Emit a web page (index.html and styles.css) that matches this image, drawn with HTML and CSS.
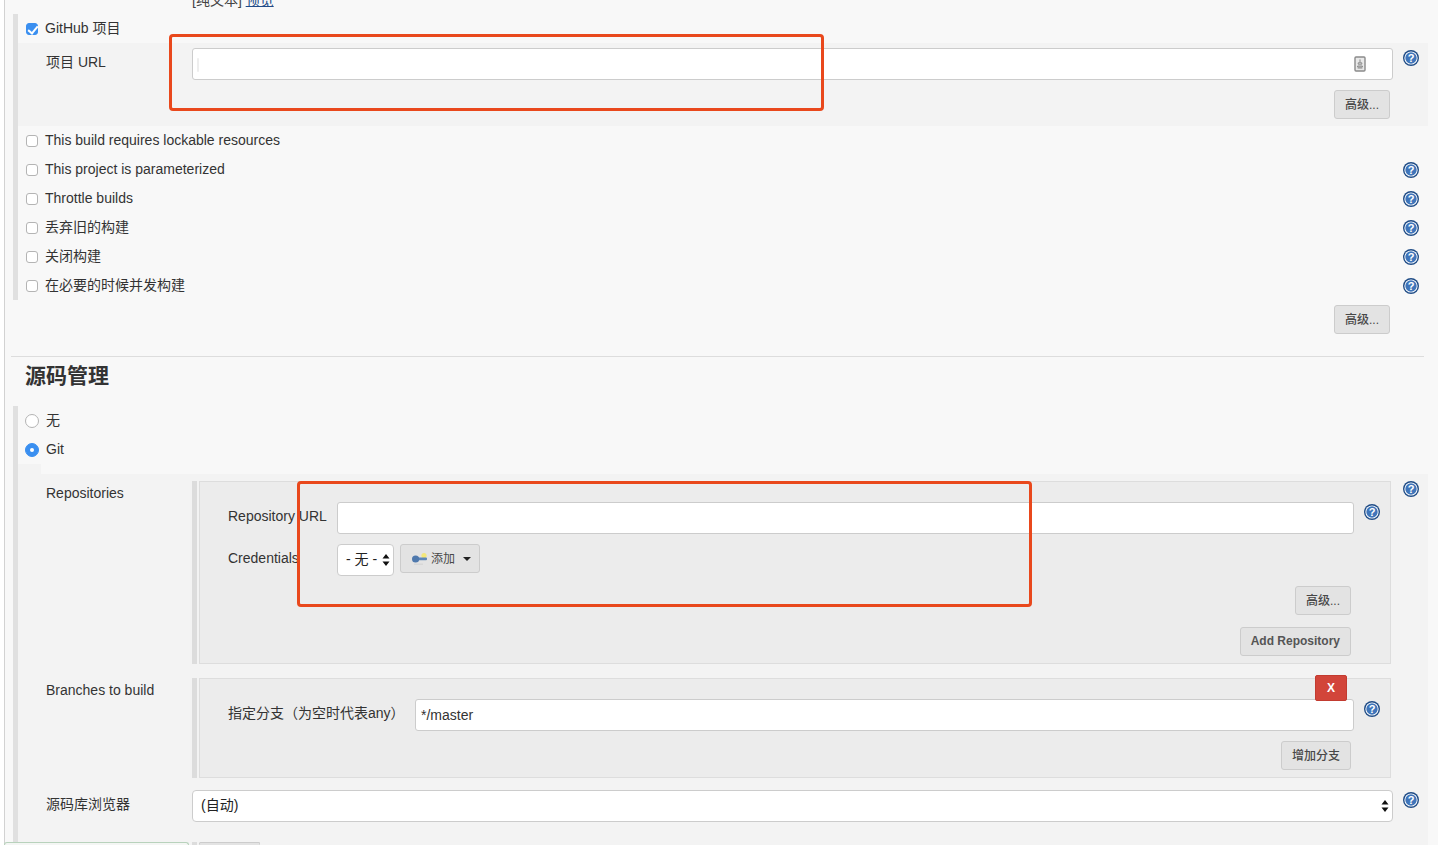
FILE: index.html
```html
<!DOCTYPE html>
<html lang="zh">
<head>
<meta charset="utf-8">
<title>Jenkins</title>
<link rel="stylesheet" href="styles.css">
</head>
<body>
<svg class="defs" width="0" height="0" aria-hidden="true">
  <defs>
    <symbol id="help" viewBox="0 0 16 16">
      <circle cx="8" cy="8" r="8" fill="#1f4c86"/>
      <circle cx="8" cy="8" r="6.6" fill="#fff"/>
      <circle cx="8" cy="8" r="5.7" fill="#3f75ba"/>
      <text x="8" y="12" text-anchor="middle" font-family="Liberation Sans, sans-serif" font-size="11" font-weight="700" fill="#fff">?</text>
    </symbol>
    <symbol id="updown" viewBox="0 0 8 12">
      <path d="M4 0 7.5 4.6H.5ZM4 12 .5 7.4h7Z" fill="#111"/>
    </symbol>
  </defs>
</svg>
<div class="page">
  <div class="pre-line">[纯文本] <a class="preview" href="#">预览</a></div>

  <section class="section">
    <div class="row"><label class="check-label"><input class="check" type="checkbox" checked>GitHub 项目</label></div>
    <div class="block block-github">
      <div class="field-row">
        <div class="label label-url">项目 URL</div>
        <div class="field-wrap">
          <input class="text-input" type="text">
          <span class="smudge"></span>
          <svg class="doc-icon" width="12" height="16" viewBox="0 0 12 16"><rect x="1" y="1" width="10" height="14" rx="1" fill="#e9e9e9" stroke="#8a8a8a" stroke-width="1.4"/><path d="M6 3.4v3.2M4.2 6.8h3.6v1.4H4.2zM3.6 10h4.8v1H3.6zM3.6 12h4.8" stroke="#8a8a8a" fill="none"/></svg>
        </div>
        <svg class="help"><use href="#help"/></svg>
      </div>
      <div class="btn-line btn-line-github"><button class="btn">高级...</button></div>
    </div>
    <div class="row"><label class="check-label"><input class="check" type="checkbox">This build requires lockable resources</label></div>
    <div class="row"><label class="check-label"><input class="check" type="checkbox">This project is parameterized</label><svg class="help"><use href="#help"/></svg></div>
    <div class="row"><label class="check-label"><input class="check" type="checkbox">Throttle builds</label><svg class="help"><use href="#help"/></svg></div>
    <div class="row"><label class="check-label"><input class="check" type="checkbox">丢弃旧的构建</label><svg class="help"><use href="#help"/></svg></div>
    <div class="row"><label class="check-label"><input class="check" type="checkbox">关闭构建</label><svg class="help"><use href="#help"/></svg></div>
    <div class="row"><label class="check-label"><input class="check" type="checkbox">在必要的时候并发构建</label><svg class="help"><use href="#help"/></svg></div>
  </section>
  <div class="btn-line btn-line-general"><button class="btn">高级...</button></div>

  <hr class="rule">
  <h2 class="title">源码管理</h2>

  <section class="section section-scm">
    <div class="row"><label class="check-label radio-label"><input class="radio" type="radio" name="scm">无</label></div>
    <div class="row"><label class="check-label radio-label"><input class="radio" type="radio" name="scm" checked>Git</label></div>
    <div class="notch"></div>
    <div class="block block-git">
      <div class="field-row">
        <div class="label label-repos">Repositories</div>
        <div class="chunk">
          <div class="box">
            <div class="inner-row">
              <div class="inner-label inner-label-url">Repository URL</div>
              <input class="text-input" type="text">
              <svg class="help help-inner"><use href="#help"/></svg>
            </div>
            <div class="inner-row inner-row-cred">
              <div class="inner-label inner-label-cred">Credentials</div>
              <div class="select-wrap select-none">
                <select class="select"><option>- 无 -</option></select>
                <svg class="updown" width="8" height="12"><use href="#updown"/></svg>
              </div>
              <button class="btn btn-add">
                <svg class="key" width="18" height="14" viewBox="0 0 18 14"><circle cx="13" cy="3.6" r="2.6" fill="#f3e77a"/><rect x="5" y="5.6" width="11" height="2.6" rx="1" fill="#5c86b8"/><circle cx="4.6" cy="7" r="3.6" fill="#4f79ad"/><path d="M3 12.2h9" stroke="#d3d3d3"/></svg>
                <span class="add-text">添加</span>
                <span class="caret"></span>
              </button>
            </div>
            <div class="btn-line btn-line-inner"><button class="btn">高级...</button></div>
            <div class="btn-line btn-line-repo"><button class="btn btn-strong">Add Repository</button></div>
          </div>
        </div>
        <svg class="help help-top"><use href="#help"/></svg>
      </div>

      <div class="field-row field-row-branch">
        <div class="label label-branch">Branches to build</div>
        <div class="chunk">
          <div class="box box-branch">
            <button class="btn-x">X</button>
            <div class="inner-row">
              <div class="inner-label inner-label-branch">指定分支（为空时代表any）</div>
              <input class="text-input" type="text" value="*/master">
              <svg class="help help-inner"><use href="#help"/></svg>
            </div>
            <div class="btn-line btn-line-inner"><button class="btn">增加分支</button></div>
          </div>
        </div>
      </div>

      <div class="field-row field-row-browser">
        <div class="label label-url">源码库浏览器</div>
        <div class="field-wrap select-wrap">
          <select class="select"><option>(自动)</option></select>
          <svg class="updown" width="8" height="12"><use href="#updown"/></svg>
        </div>
        <svg class="help"><use href="#help"/></svg>
      </div>

      <div class="field-row field-row-next">
        <div class="next-spacer"></div>
        <div class="chunk chunk-next"><button class="btn btn-next"></button></div>
      </div>
    </div>
  </section>

  <div class="tab-stub"></div>
  <div class="annot annot-a"></div>
  <div class="annot annot-b"></div>
</div>
</body>
</html>
```
FILE: styles.css
```css
* { box-sizing: border-box; }
html, body { margin: 0; height: 845px; overflow: hidden; }
body {
  background: #fff;
  color: #333;
  font-family: "Liberation Sans", "Noto Sans CJK SC", sans-serif;
  font-size: 14px;
}
.defs { position: absolute; }
.page {
  display: flow-root;
  position: relative;
  height: 845px;
  margin-left: 4px;
  background: #f8f8f8;
  border-left: 1px solid #d2d2d2;
}
.pre-line {
  height: 14px;
  margin-top: -7px;
  margin-left: 187px;
  font-size: 14px;
  line-height: 14px;
  color: #444;
}
.preview { color: #204a87; }
.section {
  margin-top: 7px;
  margin-left: 8px;
  border-left: 5px solid #e0e0e0;
}
.section-scm { height: 439px; margin-top: 11px; }
.row {
  display: flex;
  align-items: center;
  justify-content: space-between;
  height: 29px;
  padding: 0 19px 2px 8px;
}
.row > .help { margin-top: 2px; }
.check-label { display: flex; align-items: center; line-height: 20px; }
.check, .radio {
  appearance: none;
  position: relative;
  flex: none;
  width: 12px;
  height: 12px;
  margin: 2px 7px 0 0;
  background: #fff;
  border: 1px solid #b4b4b4;
  border-radius: 3px;
}
.check:checked { background: #3a8ff0; border-color: #3a8ff0; }
.check:checked::after {
  content: "";
  position: absolute;
  left: 3px;
  top: 0;
  width: 4px;
  height: 8px;
  border: solid #fff;
  border-width: 0 2px 2px 0;
  transform: rotate(40deg);
}
.radio { width: 14px; height: 14px; margin: 2px 7px 0 -1px; border-radius: 50%; }
.radio:checked { background: #3a8ff0; border-color: #3a8ff0; }
.radio:checked::after {
  content: "";
  position: absolute;
  left: 4px;
  top: 4px;
  width: 4px;
  height: 4px;
  background: #fff;
  border-radius: 50%;
}
.help { flex: none; width: 16px; height: 16px; }
.block { margin-right: 10px; background: #f3f3f3; }
.block-github { height: 83px; padding-top: 5px; }
.block-git { padding-top: 7px; height: 371px; }
.notch { width: 23px; height: 10px; background: #f3f3f3; }
.field-row {
  display: flex;
  align-items: flex-start;
  padding-left: 28px;
}
.label { flex: none; width: 146px; line-height: 20px; }
.label-url { padding-top: 4px; }
.label-repos { padding-top: 2px; }
.label-branch { padding-top: 2px; }
.field-wrap { position: relative; flex: none; width: 1201px; }
.field-wrap + .help { margin: 2px 0 0 10px; }
.text-input {
  display: block;
  width: 100%;
  height: 32px;
  padding: 0 5px;
  background: #fff;
  border: 1px solid #ccc;
  border-radius: 3px;
  color: #333;
  font: inherit;
}
.smudge {
  position: absolute;
  left: 5px;
  top: 10px;
  width: 2px;
  height: 14px;
  background: #eee;
  border-radius: 2px;
}
.doc-icon { position: absolute; right: 27px; top: 8px; }
.btn-line { display: flex; justify-content: flex-end; }
.btn-line-github { margin-top: 10px; margin-right: 38px; }
.btn-line-general { margin-top: 5px; margin-right: 48px; }
.btn {
  height: 29px;
  padding: 0 10px 2px;
  background: #e3e3e3;
  border: 1px solid #ccc;
  border-radius: 3px;
  color: #484848;
  font: 500 12px "Liberation Sans", "Noto Sans CJK SC", sans-serif;
}
.btn-strong { font-weight: 700; color: #555; }
.rule { height: 1px; margin: 22px 14px 0 6px; border: 0; background: #ddd; }
.title {
  height: 38px;
  margin: 0 0 0 20px;
  color: #333;
  font-size: 21px;
  font-weight: 700;
  line-height: 38px;
}
.chunk { flex: none; width: 1199px; padding-left: 2px; border-left: 5px solid #dcdcdc; }
.help-top { margin-left: 12px; margin-top: 0; }
.box { position: relative; width: 1192px; background: #ececec; border: 1px solid #ddd; padding: 20px 39px 7px 28px; }
.box-branch { height: 100px; }
.inner-row { display: flex; align-items: flex-start; margin-right: -3px; position: relative; }
.inner-row-cred { margin-top: 10px; }
.inner-label { flex: none; line-height: 20px; padding-top: 4px; }
.inner-label-url { width: 109px; }
.inner-label-cred { width: 109px; }
.inner-label-branch { width: 187px; }
.inner-row .text-input { flex: 1; width: auto; }
.help-inner { position: absolute; right: -26px; top: 2px; }
.btn-line-inner { margin-top: 10px; }
.btn-line-repo { margin-top: 12px; }
.select-wrap { position: relative; }
.select-none { flex: none; width: 57px; }
.select {
  display: block;
  appearance: none;
  width: 100%;
  height: 32px;
  padding: 0 8px 2px;
  background: #fff;
  border: 1px solid #ccc;
  border-radius: 4px;
  color: #222;
  font: inherit;
}
.updown { position: absolute; right: 4px; top: 10px; }
.btn-add {
  display: flex;
  align-items: center;
  flex: none;
  width: 80px;
  margin-left: 6px;
  padding: 0 0 0 10px;
  font-weight: 400;
}
.key { flex: none; margin-right: 2px; }
.add-text { line-height: 14px; }
.caret {
  margin-left: 8px;
  border: 4px solid transparent;
  border-top-color: #222;
  border-bottom: 0;
}
.field-row-branch { margin-top: 14px; }
.btn-x {
  position: absolute;
  z-index: 1;
  right: 43px;
  top: -4px;
  width: 32px;
  height: 26px;
  padding: 0;
  background: #d2453a;
  border: 1px solid #c23b30;
  border-radius: 2px;
  color: #fff;
  font: 700 12px "Liberation Sans", sans-serif;
}
.field-row-browser { margin-top: 12px; }
.field-row-next { margin-top: 20px; }
.next-spacer { flex: none; width: 146px; }
.chunk-next { height: 3px; }
.btn-next { display: block; width: 61px; height: 3px; padding: 0; border-bottom: 0; }
.tab-stub {
  position: absolute;
  left: -1px;
  top: 842px;
  width: 185px;
  height: 3px;
  background: #f4f6f4;
  border: 1px solid #b8d2bc;
  border-bottom: 0;
  border-radius: 4px 4px 0 0;
}
.annot {
  position: absolute;
  border: 3px solid #e9481c;
  border-radius: 4px;
  pointer-events: none;
}
.annot-a { left: 164px; top: 34px; width: 655px; height: 77px; }
.annot-b { left: 292px; top: 481px; width: 735px; height: 126px; }
```
